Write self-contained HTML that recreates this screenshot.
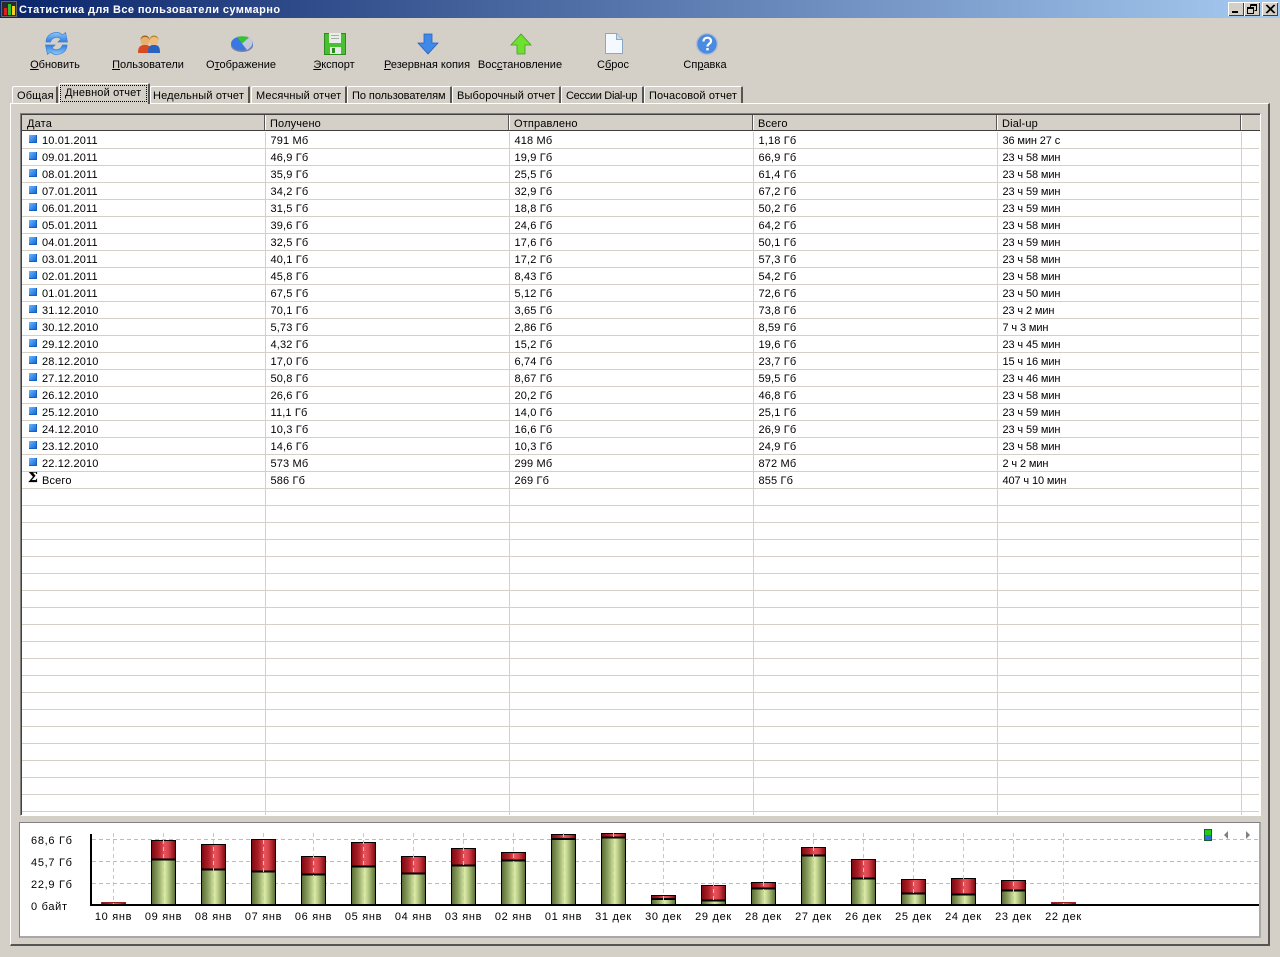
<!DOCTYPE html>
<html><head><meta charset="utf-8"><style>
html,body{margin:0;padding:0;width:1280px;height:957px;overflow:hidden;background:#d4d0c8;}
body{position:relative;font:11px/13px "Liberation Sans","Noto Sans CJK SC",sans-serif;color:#000;letter-spacing:.15px;}
.a{position:absolute;}
#title{left:0;top:0;width:1280px;height:18px;background:linear-gradient(90deg,#0a246a,#a6caf0);}
#title b{position:absolute;left:19px;top:3px;line-height:13px;padding-top:0;color:#fff;font-size:11px;letter-spacing:.4px;white-space:nowrap;}
.wb{position:absolute;top:2px;width:16px;height:14px;background:#d4d0c8;box-shadow:inset 1px 1px #fff,inset -1px -1px #404040;}
.lb{position:absolute;top:59px;width:110px;text-align:center;white-space:nowrap;letter-spacing:0;}
.ic{position:absolute;top:30px;}
.tab{position:absolute;top:86px;height:17px;background:#d4d0c8;border:1px solid #fff;border-bottom:0;border-right:2px solid #555;border-radius:2px 2px 0 0;box-sizing:border-box;white-space:nowrap;padding:3px 0 0 4px;}
#panel{left:10px;top:103px;width:1260px;height:843px;box-sizing:border-box;border:1px solid #fff;border-right:2px solid #555;border-bottom:2px solid #555;}
#frame{left:20px;top:113px;width:1241px;height:703px;box-sizing:border-box;border-top:1px solid #808080;border-left:1px solid #808080;border-right:1px solid #fff;border-bottom:1px solid #fff;background:#fff;overflow:hidden;}
#il{position:absolute;left:0;top:0;width:1px;height:100%;background:#404040;z-index:3;}
#it{position:absolute;left:0;top:0;width:100%;height:1px;background:#404040;z-index:3;}
#head{position:absolute;left:0;top:0;width:1239px;height:16px;background:#d4d0c8;border-bottom:1px solid #404040;box-sizing:content-box;}
#head i{position:absolute;top:0;height:16px;width:1px;background:#555;border-right:1px solid #fff;}
#head span{position:absolute;top:4px;white-space:nowrap;}
table{position:absolute;left:0;top:18px;border-collapse:collapse;table-layout:fixed;width:1238px;}
td{height:15px;padding:1px 0 0 5px;border-bottom:1px solid #d4d0c8;border-left:1px solid #d4d0c8;white-space:nowrap;line-height:14px;vertical-align:middle;overflow:hidden;}
td:first-child{border-left:0;padding-left:21px;position:relative;}
td:nth-child(5){letter-spacing:-.12px;}
.s::before{content:"";position:absolute;left:8px;top:3px;width:8px;height:8px;background:linear-gradient(135deg,#6ab8ff,#0a5fd0);box-shadow:inset -1px -1px #1560c0;}
.sig{position:absolute;left:7px;top:-2px;font:bold 14px "DejaVu Serif",serif;letter-spacing:0;-webkit-text-stroke:.3px #000;}
#cp{left:19px;top:822px;width:1242px;height:116px;box-sizing:border-box;background:#fff;border:1px solid #808080;border-bottom:2px solid #a8a8a8;border-right:2px solid #a8a8a8;}
svg{display:block;}
svg text{font:11px "Liberation Sans",sans-serif;letter-spacing:.7px;}
</style></head><body>

<div id="title" class="a">
<svg class="a" style="left:1px;top:1px" width="16" height="16"><rect width="16" height="16" fill="#d4d0c8"/><rect x="0.5" y="0.5" width="15" height="15" fill="#2a2a2a" stroke="#666"/><rect x="3" y="7" width="3" height="7" fill="#e02020"/><rect x="7" y="3" width="3" height="11" fill="#30c030"/><rect x="11" y="5" width="3" height="9" fill="#f0d020"/></svg>
<b style="top:4px">Статистика для Все пользователи суммарно</b>
<div class="wb" style="left:1228px"><svg width="16" height="14"><rect x="4" y="9" width="6" height="2" fill="#000"/></svg></div>
<div class="wb" style="left:1244px"><svg width="16" height="14"><path d="M6.500 2.500h6v6h-2M6.500 3.500h6M3.500 5.500h6v6h-6zM3.500 6.500h6M6.500 2.500v3" fill="none" stroke="#000"/></svg></div>
<div class="wb" style="left:1262px"><svg width="16" height="14"><path d="M4 3l8 8M5 3l8 8M12 3l-8 8M13 3l-8 8" fill="none" stroke="#000" stroke-width="1"/></svg></div>
</div>

<svg class="ic" style="left:43px" width="26" height="26" viewBox="0 0 26 26"><defs><linearGradient id="rf" x1="0" y1="0" x2="0" y2="1"><stop offset="0" stop-color="#8cc8f8"/><stop offset="1" stop-color="#2f7fe0"/></linearGradient></defs><path d="M3 12C3 6 8 2.500 14 2.500 16 2.500 18 3.500 19.500 5L22.500 2.500 24.500 12 15 12 18 9C16 7.300 14 7 12 7.500 10 8 8 10 7.500 12Z" fill="url(#rf)" stroke="#3a80d8" stroke-width=".7"/><path d="M3 12C3 6 8 2.500 14 2.500 16 2.500 18 3.500 19.500 5L22.500 2.500 24.500 12 15 12 18 9C16 7.300 14 7 12 7.500 10 8 8 10 7.500 12Z" transform="rotate(180 13.500 13.500)" fill="url(#rf)" stroke="#3a80d8" stroke-width=".7"/></svg>
<svg class="ic" style="left:136px" width="26" height="26" viewBox="0 0 26 26"><circle cx="9" cy="11" r="4.500" fill="#e8b070"/><path d="M4.500 10c0-6 9-6 9 0-1-2-2-3-4.500-3s-3.500 1-4.500 3z" fill="#a0601a"/><path d="M2 23c0-7 3-8 7-8s6 1 6 8z" fill="#d84a22"/><circle cx="18" cy="11" r="4.500" fill="#eebb80"/><path d="M13.500 10c0-6 9-6 9 0-1-2-2-3-4.500-3s-3.500 1-4.500 3z" fill="#b88a20"/><path d="M12 23c0-7 2-8 6-8s6 1 6 8z" fill="#2a62c0"/></svg>
<svg class="ic" style="left:229px" width="26" height="26" viewBox="0 0 26 26"><ellipse cx="13" cy="15.500" rx="11" ry="6.500" fill="#7880b0"/><ellipse cx="13" cy="13.500" rx="11" ry="7" fill="#3a78e0"/><path d="M13 13.500L8 7C12 6 17 6 20 7.500z" fill="#38c038"/><path d="M13 13.500L20 7.500C25 10 25 16 18 20z" fill="#c4c8d8"/></svg>
<svg class="ic" style="left:322px" width="26" height="26" viewBox="0 0 26 26"><path d="M2.500 3.500h21v21h-21z" fill="#48c030" stroke="#2c8c20"/><rect x="7" y="3" width="12" height="10" fill="#e8eee8"/><rect x="9" y="5" width="8" height="1" fill="#aaa"/><rect x="9" y="8" width="8" height="1" fill="#aaa"/><rect x="8" y="17" width="11" height="7" fill="#e8e8e8"/><rect x="10" y="18" width="3" height="5" fill="#2c8c20"/></svg>
<svg class="ic" style="left:415px" width="26" height="26" viewBox="0 0 26 26"><path d="M9 4h8v9h6L13 24 3 13h6z" fill="#3f8ae8" stroke="#2a60c0" stroke-width=".8"/></svg>
<svg class="ic" style="left:508px" width="26" height="26" viewBox="0 0 26 26"><path d="M9 24h8v-9h6L13 4 3 15h6z" fill="#70e030" stroke="#40a020" stroke-width=".8"/></svg>
<svg class="ic" style="left:601px" width="26" height="26" viewBox="0 0 26 26"><path d="M4.500 3.500h11l6 6v14h-17z" fill="#f4f8ff" stroke="#8aa8c8"/><path d="M15.500 3.500v6h6" fill="#c8d8e8" stroke="#8aa8c8"/></svg>
<svg class="ic" style="left:694px" width="26" height="26" viewBox="0 0 26 26"><circle cx="13" cy="14" r="10.500" fill="#4a8ae0" stroke="#b8c0d0" stroke-width="1.500"/><path d="M9.500 11.500c0-5 7.500-5 7.500-.5 0 3-3.500 2.500-3.500 5.500" fill="none" stroke="#fff" stroke-width="2.200"/><rect x="12.300" y="18" width="2.400" height="2.400" fill="#fff"/></svg>

<div class="lb" style="left:0px"><u>О</u>бновить</div>
<div class="lb" style="left:93px"><u>П</u>ользователи</div>
<div class="lb" style="left:186px">О<u>т</u>ображение</div>
<div class="lb" style="left:279px"><u>Э</u>кспорт</div>
<div class="lb" style="left:372px"><u>Р</u>езервная копия</div>
<div class="lb" style="left:465px">Вос<u>с</u>тановление</div>
<div class="lb" style="left:558px">С<u>б</u>рос</div>
<div class="lb" style="left:650px">Сп<u>р</u>авка</div>

<div id="panel" class="a"></div>
<div class="tab" style="left:12px;width:46px">Общая</div>
<div class="tab" style="left:59px;top:83px;width:91px;height:21px;padding:0;z-index:2"><span style="position:absolute;left:0;top:1px;width:87px;height:17px;box-sizing:border-box;border:1px dotted #000;padding:1px 0 0 4px">Дневной отчет</span></div>
<div class="tab" style="left:150px;width:100px;padding-left:2px">Недельный отчет</div>
<div class="tab" style="left:251px;width:96px">Месячный отчет</div>
<div class="tab" style="left:347px;width:105px;letter-spacing:-.05px">По пользователям</div>
<div class="tab" style="left:452px;width:109px">Выборочный отчет</div>
<div class="tab" style="left:561px;width:83px;letter-spacing:-.3px">Сессии Dial-up</div>
<div class="tab" style="left:644px;width:99px">Почасовой отчет</div>

<div id="frame" class="a">
<div id="il"></div><div id="it"></div>
<div id="head">
<span style="left:6px">Дата</span><i style="left:243px"></i>
<span style="left:249px">Получено</span><i style="left:487px"></i>
<span style="left:493px">Отправлено</span><i style="left:731px"></i>
<span style="left:737px">Всего</span><i style="left:975px"></i>
<span style="left:981px">Dial-up</span><i style="left:1219px"></i>
</div>
<table><colgroup><col style="width:244px"><col style="width:244px"><col style="width:244px"><col style="width:244px"><col style="width:244px"><col></colgroup>
<tr><td class="s">10.01.2011</td><td>791 Мб</td><td>418 Мб</td><td>1,18 Гб</td><td>36 мин 27 с</td><td></td></tr>
<tr><td class="s">09.01.2011</td><td>46,9 Гб</td><td>19,9 Гб</td><td>66,9 Гб</td><td>23 ч 58 мин</td><td></td></tr>
<tr><td class="s">08.01.2011</td><td>35,9 Гб</td><td>25,5 Гб</td><td>61,4 Гб</td><td>23 ч 58 мин</td><td></td></tr>
<tr><td class="s">07.01.2011</td><td>34,2 Гб</td><td>32,9 Гб</td><td>67,2 Гб</td><td>23 ч 59 мин</td><td></td></tr>
<tr><td class="s">06.01.2011</td><td>31,5 Гб</td><td>18,8 Гб</td><td>50,2 Гб</td><td>23 ч 59 мин</td><td></td></tr>
<tr><td class="s">05.01.2011</td><td>39,6 Гб</td><td>24,6 Гб</td><td>64,2 Гб</td><td>23 ч 58 мин</td><td></td></tr>
<tr><td class="s">04.01.2011</td><td>32,5 Гб</td><td>17,6 Гб</td><td>50,1 Гб</td><td>23 ч 59 мин</td><td></td></tr>
<tr><td class="s">03.01.2011</td><td>40,1 Гб</td><td>17,2 Гб</td><td>57,3 Гб</td><td>23 ч 58 мин</td><td></td></tr>
<tr><td class="s">02.01.2011</td><td>45,8 Гб</td><td>8,43 Гб</td><td>54,2 Гб</td><td>23 ч 58 мин</td><td></td></tr>
<tr><td class="s">01.01.2011</td><td>67,5 Гб</td><td>5,12 Гб</td><td>72,6 Гб</td><td>23 ч 50 мин</td><td></td></tr>
<tr><td class="s">31.12.2010</td><td>70,1 Гб</td><td>3,65 Гб</td><td>73,8 Гб</td><td>23 ч 2 мин</td><td></td></tr>
<tr><td class="s">30.12.2010</td><td>5,73 Гб</td><td>2,86 Гб</td><td>8,59 Гб</td><td>7 ч 3 мин</td><td></td></tr>
<tr><td class="s">29.12.2010</td><td>4,32 Гб</td><td>15,2 Гб</td><td>19,6 Гб</td><td>23 ч 45 мин</td><td></td></tr>
<tr><td class="s">28.12.2010</td><td>17,0 Гб</td><td>6,74 Гб</td><td>23,7 Гб</td><td>15 ч 16 мин</td><td></td></tr>
<tr><td class="s">27.12.2010</td><td>50,8 Гб</td><td>8,67 Гб</td><td>59,5 Гб</td><td>23 ч 46 мин</td><td></td></tr>
<tr><td class="s">26.12.2010</td><td>26,6 Гб</td><td>20,2 Гб</td><td>46,8 Гб</td><td>23 ч 58 мин</td><td></td></tr>
<tr><td class="s">25.12.2010</td><td>11,1 Гб</td><td>14,0 Гб</td><td>25,1 Гб</td><td>23 ч 59 мин</td><td></td></tr>
<tr><td class="s">24.12.2010</td><td>10,3 Гб</td><td>16,6 Гб</td><td>26,9 Гб</td><td>23 ч 59 мин</td><td></td></tr>
<tr><td class="s">23.12.2010</td><td>14,6 Гб</td><td>10,3 Гб</td><td>24,9 Гб</td><td>23 ч 58 мин</td><td></td></tr>
<tr><td class="s">22.12.2010</td><td>573 Мб</td><td>299 Мб</td><td>872 Мб</td><td>2 ч 2 мин</td><td></td></tr>
<tr><td><span class="sig">Σ</span>Всего</td><td>586 Гб</td><td>269 Гб</td><td>855 Гб</td><td>407 ч 10 мин</td><td></td></tr>
<tr><td></td><td></td><td></td><td></td><td></td><td></td></tr>
<tr><td></td><td></td><td></td><td></td><td></td><td></td></tr>
<tr><td></td><td></td><td></td><td></td><td></td><td></td></tr>
<tr><td></td><td></td><td></td><td></td><td></td><td></td></tr>
<tr><td></td><td></td><td></td><td></td><td></td><td></td></tr>
<tr><td></td><td></td><td></td><td></td><td></td><td></td></tr>
<tr><td></td><td></td><td></td><td></td><td></td><td></td></tr>
<tr><td></td><td></td><td></td><td></td><td></td><td></td></tr>
<tr><td></td><td></td><td></td><td></td><td></td><td></td></tr>
<tr><td></td><td></td><td></td><td></td><td></td><td></td></tr>
<tr><td></td><td></td><td></td><td></td><td></td><td></td></tr>
<tr><td></td><td></td><td></td><td></td><td></td><td></td></tr>
<tr><td></td><td></td><td></td><td></td><td></td><td></td></tr>
<tr><td></td><td></td><td></td><td></td><td></td><td></td></tr>
<tr><td></td><td></td><td></td><td></td><td></td><td></td></tr>
<tr><td></td><td></td><td></td><td></td><td></td><td></td></tr>
<tr><td></td><td></td><td></td><td></td><td></td><td></td></tr>
<tr><td></td><td></td><td></td><td></td><td></td><td></td></tr>
<tr><td></td><td></td><td></td><td></td><td></td><td></td></tr>
<tr><td></td><td></td><td></td><td></td><td></td><td></td></tr>
</table>
</div>

<div id="cp" class="a"></div>
<svg class="a" style="left:0;top:0;pointer-events:none" width="1280" height="957">
<defs>
<linearGradient id="r"><stop offset="0" stop-color="#7c0810"/><stop offset=".3" stop-color="#b02028"/><stop offset=".55" stop-color="#e8555e"/><stop offset=".72" stop-color="#d84048"/><stop offset="1" stop-color="#7c0810"/></linearGradient>
<linearGradient id="g"><stop offset="0" stop-color="#566830"/><stop offset=".3" stop-color="#94a868"/><stop offset=".55" stop-color="#dcecA8"/><stop offset=".72" stop-color="#b0c480"/><stop offset="1" stop-color="#566830"/></linearGradient>
</defs>
<g stroke="#bcbcbc" stroke-dasharray="4 3" fill="none"><path d="M92 839.500H1259M92 861.500H1259M92 883.500H1259"/></g>
<g stroke="#000">
<rect x="101.500" y="902.500" width="24" height="2" fill="url(#r)" stroke="#a02028"/>
<rect x="151.500" y="840.500" width="24" height="19" fill="url(#r)"/><rect x="151.500" y="859.500" width="24" height="45" fill="url(#g)"/>
<rect x="201.500" y="844.500" width="24" height="25" fill="url(#r)"/><rect x="201.500" y="869.500" width="24" height="35" fill="url(#g)"/>
<rect x="251.500" y="839.500" width="24" height="32" fill="url(#r)"/><rect x="251.500" y="871.500" width="24" height="33" fill="url(#g)"/>
<rect x="301.500" y="856.500" width="24" height="18" fill="url(#r)"/><rect x="301.500" y="874.500" width="24" height="30" fill="url(#g)"/>
<rect x="351.500" y="842.500" width="24" height="24" fill="url(#r)"/><rect x="351.500" y="866.500" width="24" height="38" fill="url(#g)"/>
<rect x="401.500" y="856.500" width="24" height="17" fill="url(#r)"/><rect x="401.500" y="873.500" width="24" height="31" fill="url(#g)"/>
<rect x="451.500" y="848.500" width="24" height="17" fill="url(#r)"/><rect x="451.500" y="865.500" width="24" height="39" fill="url(#g)"/>
<rect x="501.500" y="852.500" width="24" height="8" fill="url(#r)"/><rect x="501.500" y="860.500" width="24" height="44" fill="url(#g)"/>
<rect x="551.500" y="834.500" width="24" height="5" fill="url(#r)"/><rect x="551.500" y="838.500" width="24" height="66" fill="url(#g)"/>
<rect x="601.500" y="833.500" width="24" height="4" fill="url(#r)"/><rect x="601.500" y="837.500" width="24" height="67" fill="url(#g)"/>
<rect x="651.500" y="895.500" width="24" height="4" fill="url(#r)"/><rect x="651.500" y="898.500" width="24" height="6" fill="url(#g)"/>
<rect x="701.500" y="885.500" width="24" height="15" fill="url(#r)"/><rect x="701.500" y="900.500" width="24" height="4" fill="url(#g)"/>
<rect x="751.500" y="882.500" width="24" height="6" fill="url(#r)"/><rect x="751.500" y="888.500" width="24" height="16" fill="url(#g)"/>
<rect x="801.500" y="847.500" width="24" height="8" fill="url(#r)"/><rect x="801.500" y="855.500" width="24" height="49" fill="url(#g)"/>
<rect x="851.500" y="859.500" width="24" height="19" fill="url(#r)"/><rect x="851.500" y="878.500" width="24" height="26" fill="url(#g)"/>
<rect x="901.500" y="879.500" width="24" height="14" fill="url(#r)"/><rect x="901.500" y="893.500" width="24" height="11" fill="url(#g)"/>
<rect x="951.500" y="878.500" width="24" height="16" fill="url(#r)"/><rect x="951.500" y="894.500" width="24" height="10" fill="url(#g)"/>
<rect x="1001.500" y="880.500" width="24" height="10" fill="url(#r)"/><rect x="1001.500" y="890.500" width="24" height="14" fill="url(#g)"/>
<rect x="1051.500" y="902.500" width="24" height="2" fill="url(#r)" stroke="#a02028"/>
</g>
<path d="M151 859.500h25M201 869.500h25M251 871.500h25M301 874.500h25M351 866.500h25M401 873.500h25M451 865.500h25M501 860.500h25M551 839h25M601 837.500h25M651 899h25M701 900.500h25M751 888.500h25M801 855.500h25M851 878.500h25M901 893.500h25M951 894.500h25M1001 890.500h25" stroke="#000" stroke-width="2" fill="none"/>
<path d="M113.500 833V904M163.500 833V904M213.500 833V904M263.500 833V904M313.500 833V904M363.500 833V904M413.500 833V904M463.500 833V904M513.500 833V904M563.500 833V904M613.500 833V904M663.500 833V904M713.500 833V904M763.500 833V904M813.500 833V904M863.500 833V904M913.500 833V904M963.500 833V904M1013.500 833V904M1063.500 833V904" stroke="#c8c8c8" stroke-dasharray="4 3" fill="none"/>
<rect x="90" y="834" width="2" height="72" fill="#000"/><rect x="90" y="904" width="1169" height="2" fill="#000"/>
<g>
<text x="31" y="844">68,6 Гб</text><text x="31" y="866">45,7 Гб</text><text x="31" y="888">22,9 Гб</text><text x="31" y="910">0 байт</text>
</g>
<g text-anchor="middle">
<text x="113.500" y="920">10 янв</text><text x="163.500" y="920">09 янв</text><text x="213.500" y="920">08 янв</text><text x="263.500" y="920">07 янв</text><text x="313.500" y="920">06 янв</text><text x="363.500" y="920">05 янв</text><text x="413.500" y="920">04 янв</text><text x="463.500" y="920">03 янв</text><text x="513.500" y="920">02 янв</text><text x="563.500" y="920">01 янв</text><text x="613.500" y="920">31 дек</text><text x="663.500" y="920">30 дек</text><text x="713.500" y="920">29 дек</text><text x="763.500" y="920">28 дек</text><text x="813.500" y="920">27 дек</text><text x="863.500" y="920">26 дек</text><text x="913.500" y="920">25 дек</text><text x="963.500" y="920">24 дек</text><text x="1013.500" y="920">23 дек</text><text x="1063.500" y="920">22 дек</text>
</g>
<rect x="1204" y="829" width="8" height="6" fill="#20d010"/><rect x="1204" y="835" width="8" height="6" fill="#2a70d8"/><rect x="1204.500" y="829.500" width="7" height="11" fill="none" stroke="#1a5a30"/>
<path d="M1228 831v8l-4-4zM1246 831v8l4-4z" fill="#808080"/>
</svg>
</body></html>
